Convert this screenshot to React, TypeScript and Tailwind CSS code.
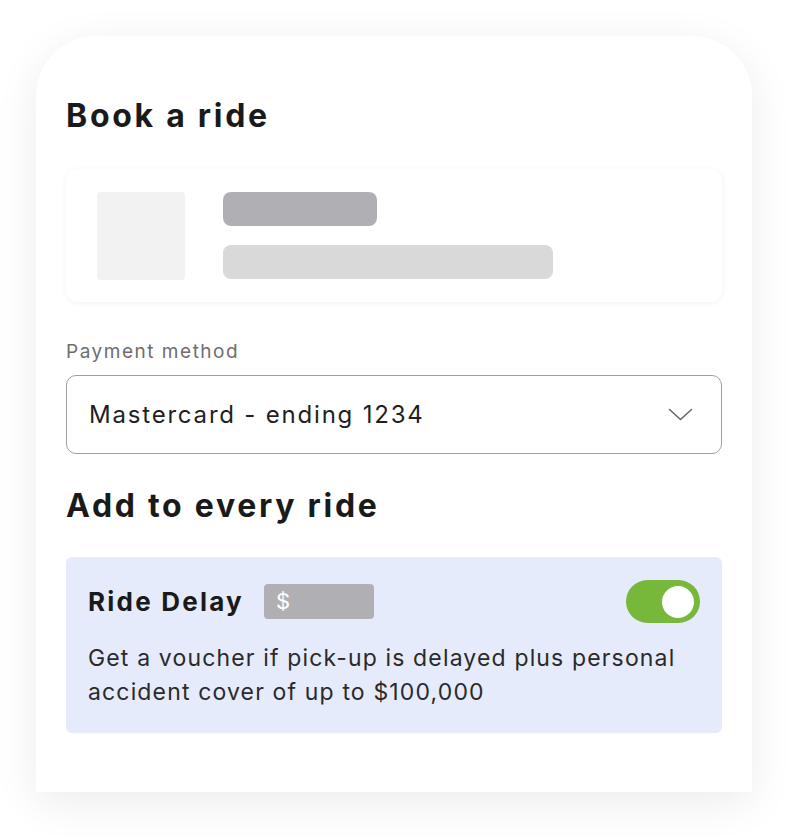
export default function App() {
  return (
    <div className="min-h-screen bg-white pt-9 px-9 font-['Inter',sans-serif]">
      <div className="h-[756px] w-[716px] rounded-t-[60px] bg-white px-[30px] pt-[60px] shadow-[0_10px_44px_rgba(0,0,0,0.08)]">
        <h1 className="text-[32px] font-bold leading-[40px] tracking-[0.085em] text-[#1a1a1a]">Book a ride</h1>

        {/* skeleton card */}
        <div className="mt-[33px] flex h-[133px] items-start gap-[38px] rounded-xl bg-white px-[31px] pt-[23px] shadow-[0_1px_6px_rgba(0,0,0,0.06)]">
          <div className="h-[88px] w-[88px] rounded bg-[#f2f2f2]" />
          <div className="flex flex-col gap-[19px]">
            <div className="h-[34px] w-[154px] rounded-lg bg-[#b0b0b4]" />
            <div className="h-[34px] w-[330px] rounded-lg bg-[#d9d9d9]" />
          </div>
        </div>

        <p className="mt-[38px] text-[19px] leading-[24px] tracking-[0.08em] text-[#6e6e6e]">Payment method</p>
        <div className="mt-[11px] flex h-[79px] items-center justify-between rounded-[10px] border border-[#a0a0a0] pl-[22px] pr-[28px]">
          <span className="text-[24px] tracking-[0.075em] text-[#1f1f1f]">Mastercard - ending 1234</span>
          <svg width="25" height="13" viewBox="0 0 25 13" fill="none" stroke="#666" strokeWidth="1.6" strokeLinecap="round" strokeLinejoin="round">
            <polyline points="1.5,1.5 12.5,11.5 23.5,1.5" />
          </svg>
        </div>

        <h2 className="mt-[32px] text-[32px] font-bold leading-[40px] tracking-[0.085em] text-[#1a1a1a]">Add to every ride</h2>

        <div className="mt-[31px] rounded-md bg-[#e6ebfc] px-[22px] pb-[24px] pt-[23px]">
          <div className="flex items-center justify-between">
            <div className="flex items-center gap-[20px]">
              <span className="text-[26px] font-bold tracking-[0.085em] text-[#1a1a1a]">Ride Delay</span>
              <span className="flex h-[35px] w-[110px] items-center rounded-sm bg-[#b0b0b4] px-[12px] text-[22px] text-white">$</span>
            </div>
            <div className="flex h-[43px] w-[74px] items-center justify-end rounded-full bg-[#77b83a] pr-[6px]">
              <div className="h-[32px] w-[32px] rounded-full bg-white" />
            </div>
          </div>
          <p className="mt-[18px] text-[23px] leading-[34px] tracking-[0.05em] text-[#2a2a2a]">
            Get a voucher if pick-up is delayed plus personal accident cover of up to $100,000
          </p>
        </div>
      </div>
    </div>
  )
}
